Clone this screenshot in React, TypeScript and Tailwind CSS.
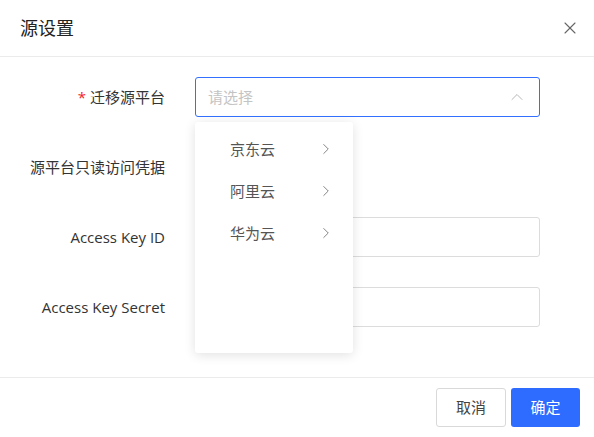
import React from 'react';
import { X, ChevronUp, ChevronRight } from 'lucide-react';

const font = { fontFamily: '"Open Sans", "Noto Sans CJK SC", sans-serif' };

const platforms = ['京东云', '阿里云', '华为云'];

const FormRow: React.FC<{ label: string; required?: boolean; children?: React.ReactNode }> = ({ label, required, children }) => (
  <div className="flex items-center h-10">
    <label className="w-[165px] shrink-0 text-right text-[15px] text-[#333]">
      {required && <span className="text-[#f5222d] mr-1">*</span>}
      {label}
    </label>
    <div className="flex-1 ml-[30px] mr-[54px] h-10">{children}</div>
  </div>
);

export default function App() {
  return (
    <div className="w-[594px] h-[437px] bg-white flex flex-col relative" style={font}>
      {/* Header */}
      <div className="h-[57px] shrink-0 flex items-center justify-between pl-5 pr-[14px] border-b border-[#ebebeb]">
        <h2 className="text-lg text-[#222]">源设置</h2>
        <X className="w-5 h-5 text-[#666]" strokeWidth={1.3} />
      </div>

      {/* Body */}
      <div className="flex-1 flex flex-col gap-[30px] pt-5">
        <FormRow label="迁移源平台" required>
          <div className="relative h-10">
            <div className="h-10 border border-[#3370ff] rounded-[3px] flex items-center justify-between pl-3 pr-3">
              <span className="text-[15px] text-[#c4c4c4]">请选择</span>
              <ChevronUp className="w-5 h-5 text-[#b8b8b8]" strokeWidth={1.2} />
            </div>
            {/* Dropdown */}
            <div className="absolute left-0 top-[45px] w-[158px] h-[231px] bg-white rounded-[3px] shadow-[0_2px_12px_rgba(0,0,0,0.12)] z-10 pt-1.5">
              {platforms.map(p => (
                <div key={p} className="h-[42px] flex items-center justify-between pl-[35px] pr-[18px] text-[15px] text-[#555]">
                  <span>{p}</span>
                  <ChevronRight className="w-[18px] h-[18px] text-[#777]" strokeWidth={1.2} />
                </div>
              ))}
            </div>
          </div>
        </FormRow>
        <FormRow label="源平台只读访问凭据" />
        <FormRow label="Access Key ID">
          <div className="h-10 border border-[#dcdcdc] rounded-[3px]" />
        </FormRow>
        <FormRow label="Access Key Secret">
          <div className="h-10 border border-[#dcdcdc] rounded-[3px]" />
        </FormRow>
      </div>

      {/* Footer */}
      <div className="h-[60px] shrink-0 border-t border-[#ebebeb] flex justify-end items-start pt-[10px] pr-[14px] gap-[5px]">
        <button className="w-[70px] h-[39px] border border-[#d9d9d9] rounded-[3px] bg-white text-[15px] text-[#444]">取消</button>
        <button className="w-[69px] h-[39px] rounded-[3px] bg-[#2e6bff] text-[15px] text-white">确定</button>
      </div>
    </div>
  );
}
